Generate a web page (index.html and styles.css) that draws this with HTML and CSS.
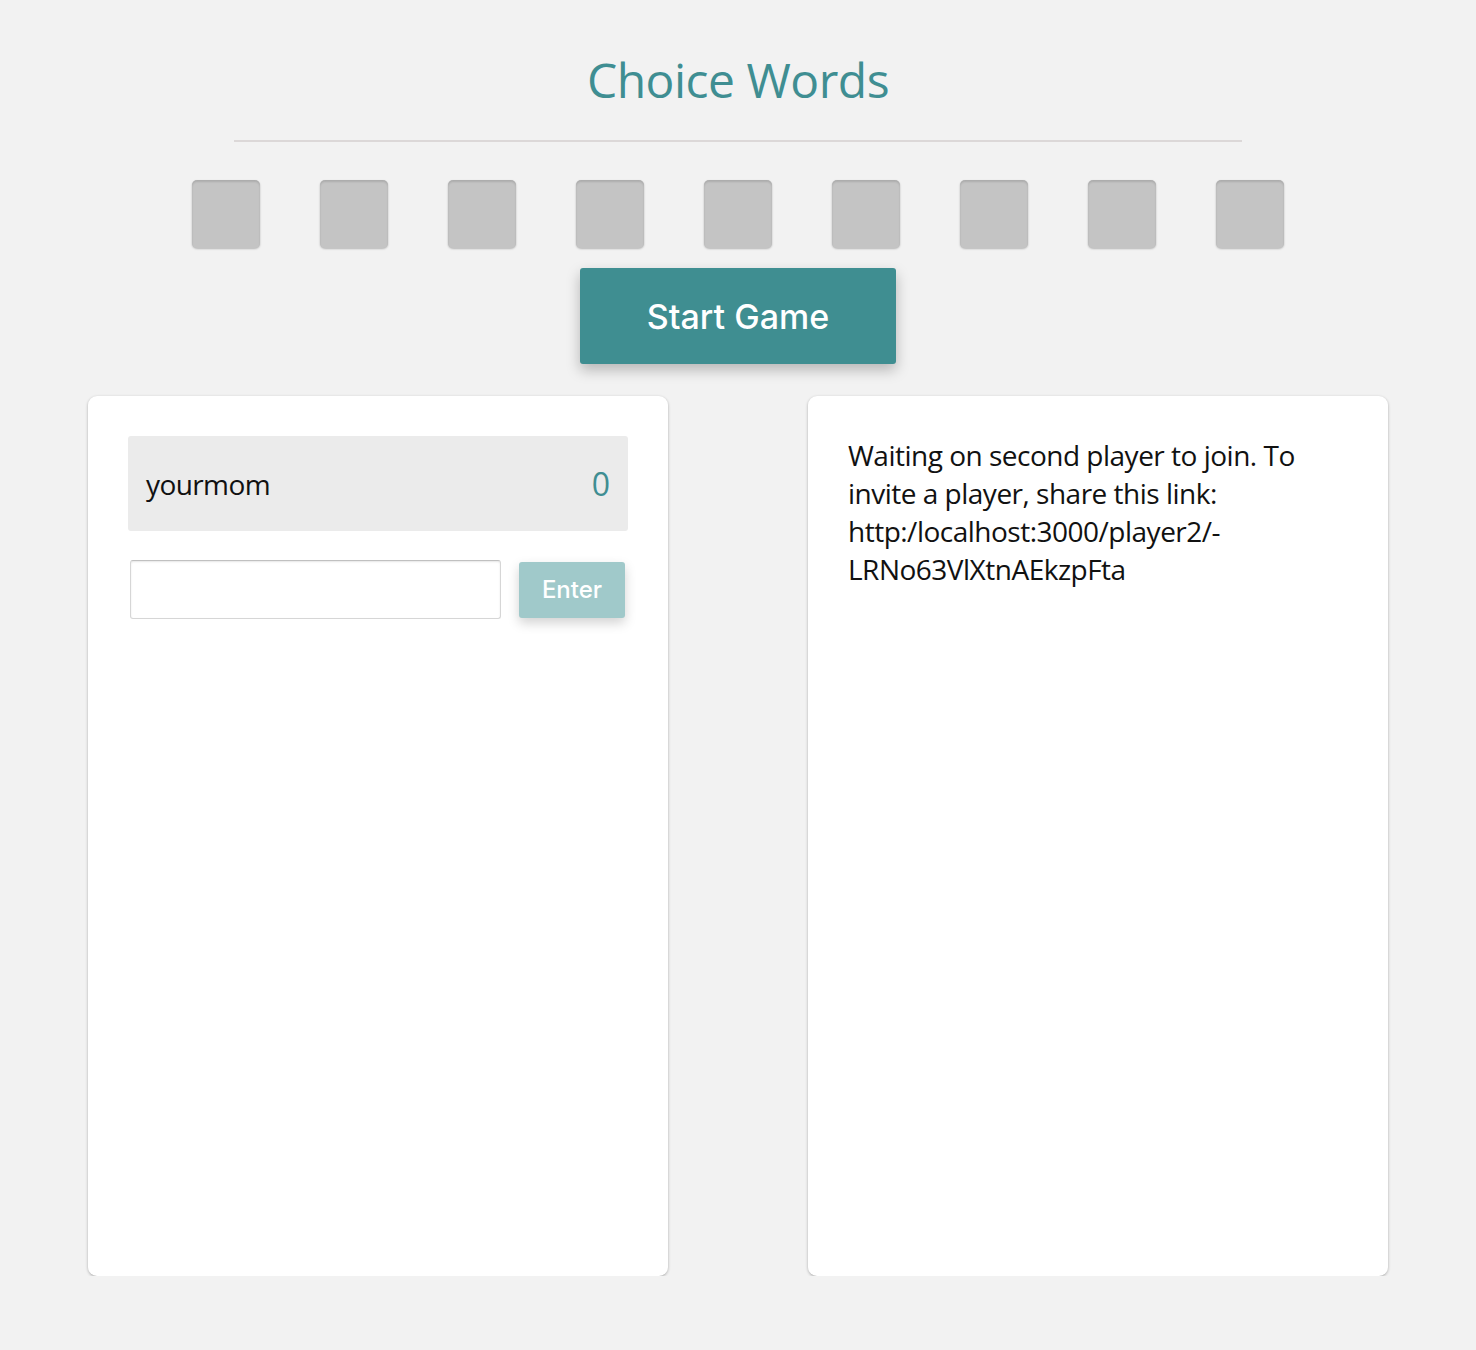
FILE: index.html
```html
<!DOCTYPE html>
<html>
<head>
<meta charset="utf-8">
<link rel="stylesheet" href="styles.css">
</head>
<body>
<div class="page">
  <h1 class="title">Choice Words</h1>
  <hr class="rule">
  <div class="tiles">
    <div class="tile"></div><div class="tile"></div><div class="tile"></div>
    <div class="tile"></div><div class="tile"></div><div class="tile"></div>
    <div class="tile"></div><div class="tile"></div><div class="tile"></div>
  </div>
  <button class="start">Start Game</button>
  <div class="cards">
    <div class="card">
      <div class="player">
        <span class="name">yourmom</span>
        <span class="score">0</span>
      </div>
      <div class="entry">
        <input class="word" type="text">
        <button class="enter">Enter</button>
      </div>
    </div>
    <div class="card">
      <p class="msg">Waiting on second player to join. To invite a player, share this link: http:/localhost:3000/player2/-LRNo63VlXtnAEkzpFta</p>
    </div>
  </div>
</div>
</body>
</html>
```

FILE: styles.css
```css
html, body {
  margin: 0;
  padding: 0;
  background: #f2f2f2;
}
body {
  font-family: "Open Sans", sans-serif;
}
.page {
  width: 1476px;
  display: flex;
  flex-direction: column;
  align-items: center;
}
.title {
  margin: 46px 0 0 0;
  font-weight: 400;
  font-size: 48px;
  line-height: 68px;
  color: #3f8e92;
  letter-spacing: -0.5px;
}
.rule {
  width: 1008px;
  margin: 26px 0 0 0;
  border: 0;
  border-top: 2px solid #dcd8d8;
}
.tiles {
  display: flex;
  gap: 60px;
  margin-top: 38px;
}
.tile {
  width: 68px;
  height: 68px;
  background: #c4c4c4;
  border-radius: 5px;
  box-shadow: inset 0 2px 2px rgba(0,0,0,0.12), 0 1px 2px rgba(0,0,0,0.25);
}
.start {
  margin-top: 20px;
  width: 316px;
  height: 96px;
  border: 0;
  border-radius: 3px;
  background: #3f8e91;
  color: #fff;
  font-family: "Inter", "Roboto", sans-serif;
  font-size: 34px;
  font-weight: 500;
  box-shadow: 0 6px 14px rgba(0,0,0,0.25);
}
.cards {
  display: flex;
  gap: 140px;
  margin-top: 32px;
}
.card {
  width: 580px;
  height: 880px;
  box-sizing: border-box;
  background: #fff;
  border-radius: 9px;
  box-shadow: 0 1px 3px rgba(0,0,0,0.3);
  padding: 40px;
}
.player {
  height: 95px;
  background: #ebebeb;
  border-radius: 3px;
  display: flex;
  align-items: center;
  justify-content: space-between;
  padding: 0 18px;
  box-sizing: border-box;
  font-size: 28px;
}
.name {
  color: #111;
  letter-spacing: -0.6px;
}
.score {
  color: #3f8e92;
  font-size: 32px;
}
.entry {
  display: flex;
  align-items: center;
  margin-top: 29px;
  padding-left: 2px;
  gap: 18px;
}
.word {
  width: 371px;
  height: 59px;
  box-sizing: border-box;
  border: 1px solid #d6d6d6;
  border-top-color: #c0c0c0;
  border-radius: 3px;
  box-shadow: inset 0 1px 2px rgba(0,0,0,0.1);
  margin: 0;
}
.enter {
  width: 106px;
  height: 56px;
  border: 0;
  border-radius: 3px;
  background: #a0c9ca;
  color: #fff;
  font-family: "Inter", "Roboto", sans-serif;
  font-size: 24px;
  font-weight: 500;
  box-shadow: 0 5px 12px rgba(0,0,0,0.18);
}
.msg {
  margin: 0;
  font-size: 28px;
  line-height: 38px;
  color: #111;
  letter-spacing: -0.5px;
}
```
